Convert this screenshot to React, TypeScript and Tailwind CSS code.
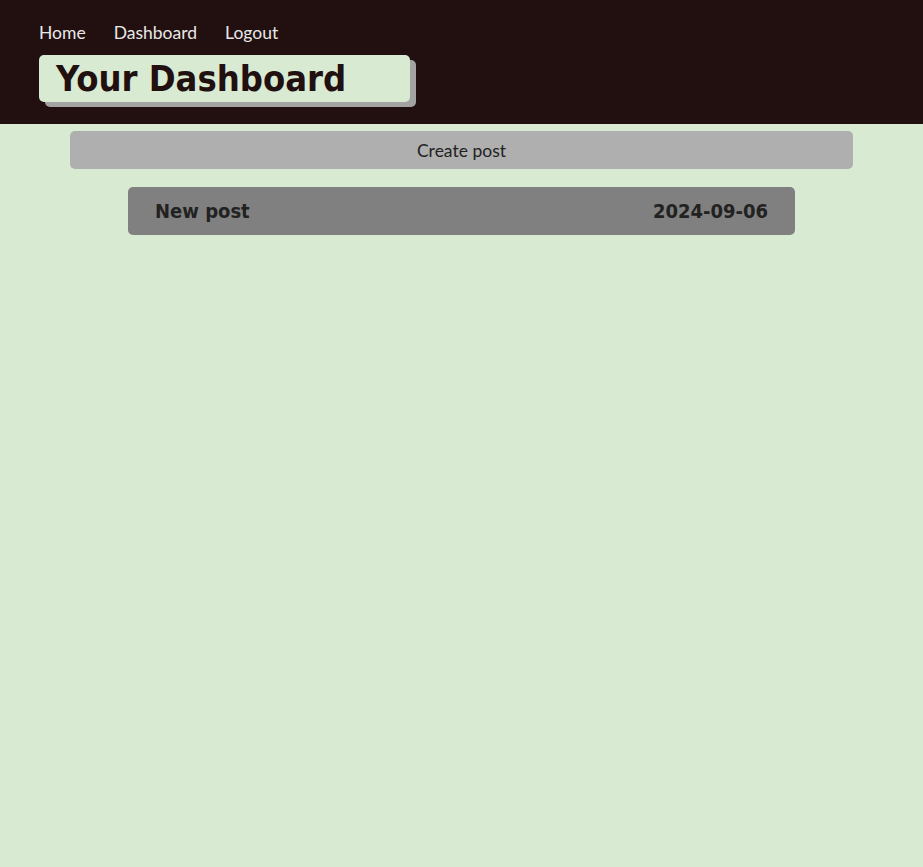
export default function App() {
  const navLinks = ["Home", "Dashboard", "Logout"];

  return (
    <div className="min-h-[867px] bg-[#d9ead3] font-['DejaVu_Sans_Condensed','DejaVu_Sans',sans-serif]">
      <header className="bg-[#221010] h-[124px] px-[39px] pt-[22px]">
        <nav className="flex gap-[28px] text-[#e8e8e8] text-[17.5px] leading-[22px] font-['Lato','DejaVu_Sans',sans-serif]">
          {navLinks.map((label) => (
            <a key={label} href="#">
              {label}
            </a>
          ))}
        </nav>
        <div className="mt-[11px] w-[371px] h-[47px] bg-[#d9ead3] rounded-[5px] shadow-[6px_5px_0_#a3a3a3] pl-[17px] flex items-center">
          <h1 className="text-[36px] font-bold text-[#221010] leading-none">Your Dashboard</h1>
        </div>
      </header>
      <main className="flex flex-col items-center pt-[7px]">
        <button className="w-[783px] h-[38px] pt-[2px] bg-[#afafaf] rounded-[5px] text-[17.5px] text-[#222] font-['Lato','DejaVu_Sans',sans-serif]">
          Create post
        </button>
        <div className="mt-[18px] w-[667px] h-[48px] bg-[#808080] rounded-[5px] px-[27px] flex items-center justify-between text-[20px] font-bold text-[#222]">
          <span>New post</span>
          <span>2024-09-06</span>
        </div>
      </main>
    </div>
  );
}
